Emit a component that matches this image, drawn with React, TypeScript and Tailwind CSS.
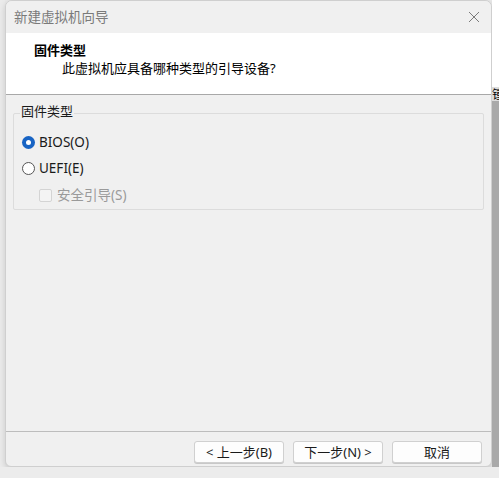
import React from "react";

const font = { fontFamily: '"Noto Sans", "Noto Sans CJK SC", sans-serif' };

function Btn({ children }: { children: React.ReactNode }) {
  return (
    <div className="w-[90px] h-[22px] flex items-center justify-center rounded-[3px] border border-[#d0d0d0] bg-[#fdfdfd] text-[13px] text-[#1a1a1a] leading-none shadow-[0_1px_0_#c8c8c8]">
      {children}
    </div>
  );
}

export default function App() {
  return (
    <div className="w-[499px] h-[478px] flex flex-col bg-[#e9e9e9] overflow-hidden" style={font}>
      <div className="flex h-[467px]">
        <div className="w-[5px] bg-[#ebebeb]" />
        <div className="w-[487px] flex flex-col bg-[#f0f0f0] border border-[#cfcfcf] rounded-t-[7px] rounded-b-[6px] overflow-hidden shadow-[0_2px_6px_rgba(0,0,0,0.15)]">
          <div className="h-[32px] flex items-center justify-between pl-[8px] pr-[10px] bg-[#f0f0f0]">
            <span className="text-[13.5px] text-[#7a7a7a]">新建虚拟机向导</span>
            <svg width="12" height="12" viewBox="0 0 12 12" className="mr-[1px]">
              <path d="M1 1 L11 11 M11 1 L1 11" stroke="#7b7b7b" strokeWidth="1" fill="none" />
            </svg>
          </div>
          <div className="h-[62px] bg-white border-b border-[#a8a8a8] pl-[28px] pt-[8px] flex flex-col">
            <span className="text-[13px] font-bold text-black leading-[18px]">固件类型</span>
            <span className="text-[13px] text-black leading-[18px] pl-[28px]">此虚拟机应具备哪种类型的引导设备?</span>
          </div>
          <div className="flex-1 flex flex-col px-[7px]">
            <div className="mt-[10px] relative">
              <div className="mt-[8px] h-[97px] border border-[#dcdcdc] rounded-[2px] flex flex-col pl-[8px] pt-[19px]">
                <div className="flex items-center h-[18px] gap-[4px]">
                  <span className="w-[13px] h-[13px] rounded-full bg-[#1864c4] flex items-center justify-center">
                    <span className="w-[5px] h-[5px] rounded-full bg-white" />
                  </span>
                  <span className="text-[13.5px] text-[#1a1a1a]">BIOS(O)</span>
                </div>
                <div className="flex items-center h-[18px] gap-[4px] mt-[8px]">
                  <span className="w-[13px] h-[13px] rounded-full border border-[#555] bg-white" />
                  <span className="text-[13.5px] text-[#1a1a1a]">UEFI(E)</span>
                </div>
                <div className="flex items-center h-[18px] gap-[5px] mt-[9px] pl-[17px]">
                  <span className="w-[13px] h-[13px] rounded-[2px] border border-[#d4d4d4] bg-[#f4f4f4]" />
                  <span className="text-[13.5px] text-[#9a9a9a]">安全引导(S)</span>
                </div>
              </div>
              <span className="absolute left-[7px] top-[-3px] px-[1px] bg-[#f0f0f0] text-[13px] text-[#1a1a1a] leading-[18px]">固件类型</span>
            </div>
            <div className="flex-1" />
            <div className="border-t border-[#bdbdbd] mx-[-7px]" />
            <div className="h-[34px] flex items-start justify-end gap-[9px] pt-[9px] pr-[2px]">
              <Btn>&lt; 上一步(B)</Btn>
              <Btn>下一步(N) &gt;</Btn>
              <Btn>取消</Btn>
            </div>
          </div>
        </div>
        <div className="w-[7px] flex flex-col">
          <div className="h-[87px] bg-white" />
          <div className="h-[14px] bg-[#dcdcdc] text-[12px] leading-[14px] text-black overflow-hidden whitespace-nowrap" style={{ fontFamily: '"Noto Sans CJK SC", sans-serif' }}>锺</div>
          <div className="flex-1 bg-[#a9a9a9]" />
        </div>
      </div>
      <div className="flex-1 bg-[#ececec]" />
    </div>
  );
}
